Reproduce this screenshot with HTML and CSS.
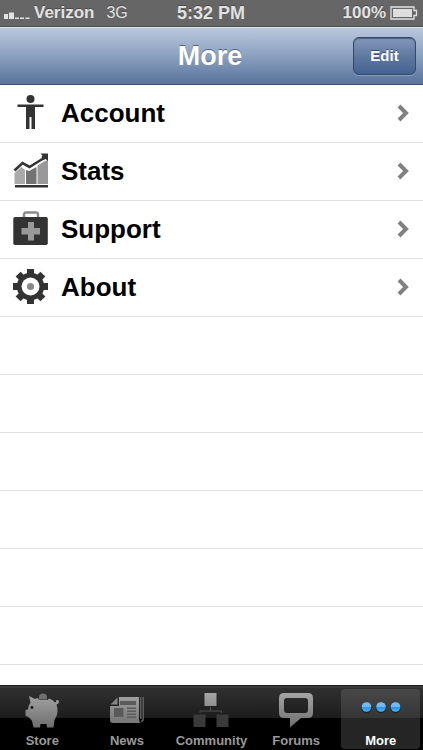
FILE: index.html
```html
<!DOCTYPE html>
<html lang="en">
<head>
<meta charset="utf-8">
<meta name="viewport" content="width=device-width, initial-scale=1">
<title>More</title>
<link rel="stylesheet" href="styles.css">
</head>
<body>
<div class="status">
  <div class="status-side">
    <svg class="signal" width="26" height="8" viewBox="0 0 26 8" fill="#e2e2e2" aria-hidden="true"><path d="M0 2h4v5H0zM5 0.500h5V7H5zM11 5.500h4V7h-4zM16 5.500h4V7h-4zM21.500 5.500h4V7h-4z"/></svg>
    <span class="carrier">Verizon</span>
    <span class="network">3G</span>
  </div>
  <span class="clock">5:32 PM</span>
  <div class="status-side status-right">
    <span>100%</span>
    <svg class="battery" width="28" height="14" viewBox="0 0 28 14" aria-hidden="true"><path d="M1 1h23v3.500h2.500v5H24V13H1z" fill="none" stroke="#e2e2e2" stroke-width="1.300"/><path d="M3 3h19v8H3z" fill="#dedede"/></svg>
  </div>
</div>
<header class="nav">
  <h1 class="title">More</h1>
  <button class="edit" type="button">Edit</button>
</header>
<main class="content">
  <ul class="list">
    <li class="row"><a class="link" href="#account">
      <svg class="icon" width="36" height="36" viewBox="0 0 36 36" fill="#333" aria-hidden="true"><circle cx="17.500" cy="4" r="4"/><path d="M4.500 9.500h26v2.500H22V34h-3.500V22h-2v12H13V12H4.500z"/></svg>
      <span>Account</span>
      <svg class="chevron" width="14" height="18" viewBox="0 0 14 18" aria-hidden="true"><path d="M2 2l7 7-7 7"/></svg>
    </a></li>
    <li class="row"><a class="link" href="#stats">
      <svg class="icon" width="36" height="36" viewBox="0 0 36 36" aria-hidden="true"><path d="M1.500 20l7-6L12 17v14H1.500z" fill="#aaa"/><path d="M13 17l3 1 7.500-4v17H13z" fill="#737373"/><path d="M24.500 12.500L32 8l3-1v24H24.500z" fill="#999"/><path d="M1.500 17.500l8-7.500 7 4L31 5" fill="none" stroke="#333" stroke-width="2.600"/><path d="M27.500 0.500H35V8l-2.500-2-2 1-2-3 1-1.500zM2 32h33v2.500H2z" fill="#333"/></svg>
      <span>Stats</span>
      <svg class="chevron" width="14" height="18" viewBox="0 0 14 18" aria-hidden="true"><path d="M2 2l7 7-7 7"/></svg>
    </a></li>
    <li class="row"><a class="link" href="#support">
      <svg class="icon" width="36" height="36" viewBox="0 0 36 36" aria-hidden="true"><path d="M11 6V3.500Q11 1.500 13 1.500h10Q25 1.500 25 3.500V6" fill="none" stroke="#8c8c8c" stroke-width="2.400"/><rect x="0.300" y="6" width="34.500" height="28" rx="1.800" fill="#333"/><path d="M15 11h6v6h6v6.500h-6v6h-6v-6H8.500V17H15z" fill="#999"/></svg>
      <span>Support</span>
      <svg class="chevron" width="14" height="18" viewBox="0 0 14 18" aria-hidden="true"><path d="M2 2l7 7-7 7"/></svg>
    </a></li>
    <li class="row"><a class="link" href="#about">
      <svg class="icon" width="36" height="36" viewBox="0 0 36 36" aria-hidden="true"><g transform="translate(17.500 17.500)"><g fill="#333"><path id="teeth" d="M-3.500-17.500h7v35h-7z"/><use href="#teeth" transform="rotate(45)"/><use href="#teeth" transform="rotate(90)"/><use href="#teeth" transform="rotate(135)"/><circle r="13.700"/></g><circle r="9" fill="#fff"/><circle r="3.600" fill="#888"/></g></svg>
      <span>About</span>
      <svg class="chevron" width="14" height="18" viewBox="0 0 14 18" aria-hidden="true"><path d="M2 2l7 7-7 7"/></svg>
    </a></li>
  </ul>
</main>
<nav class="tabs">
  <a class="tab" href="#store">
    <svg width="36" height="36" viewBox="0 0 36 36" aria-hidden="true"><defs><linearGradient id="metal" gradientUnits="userSpaceOnUse" x1="0" y1="0" x2="0" y2="36"><stop offset="0" stop-color="#a5a5a5"/><stop offset="1" stop-color="#6c6c6c"/></linearGradient></defs><path d="M15 4.500a4 4 0 0 1 8 0V6.500h-8z" fill="#707070"/><path d="M5 3l6 3 2.500-1 2 2h8l1.500-1.500q4.500 1.500 6 4 1.500-.500 1-2 2-1 3 .500 0 3-2.500 3.500 3 8-2 15.500L29.500 34.500H23L22.500 31h-6L16 34.500H9.500L8 28q-1.500-2.500-3-3.500L1.500 22.500v-5.500l2.500-.500Q4.500 12 6.500 9.500z" fill="url(#metal)"/><circle cx="8" cy="14.500" r="1.400" fill="#181818"/></svg>
    <span>Store</span>
  </a>
  <a class="tab" href="#news">
    <svg width="36" height="36" viewBox="0 0 36 36" aria-hidden="true"><path d="M10 4h20v22q0 3 2 4H4q-3 0-3-3V13h9z" fill="url(#metal)"/><path d="M1.500 11.500L8.500 4.500v7z" fill="#858585"/><path d="M31 4h1.500v22H31zM33.500 4H35v22q0 3-3 3v-1.500q1.500 0 1.500-2z" fill="#5b5b5b"/><path d="M11 8h16v4H11zM5 15h9.500v9H5zM18 14.500h9V16h-9zM18 17.500h9V19h-9zM18 20.500h9V22h-9zM18 23.500h9V25h-9z" fill="#5a5a5a"/></svg>
    <span>News</span>
  </a>
  <a class="tab" href="#community">
    <svg width="36" height="36" viewBox="0 0 36 36" aria-hidden="true"><path d="M11.500 0h12v13h-12z" fill="url(#metal)"/><path d="M17.500 14v4M7 20v-2h21.500v2" fill="none" stroke="#505050"/><path d="M.500 21.500h12V34H.500zM23.500 21.500h12V34h-12z" fill="#3a3a3a"/></svg>
    <span>Community</span>
  </a>
  <a class="tab" href="#forums">
    <svg width="36" height="36" viewBox="0 0 36 36" aria-hidden="true"><path fill-rule="evenodd" d="M6 0h24q5 0 5 5v15q0 5-5 5h-7L12 34.500V25H6q-5 0-5-5V5q0-5 5-5zM9 5q-3 0-3 3v9q0 3 3 3h18q3 0 3-3V8q0-3-3-3z" fill="url(#metal)"/></svg>
    <span>Forums</span>
  </a>
  <a class="tab tab-on" href="#more" aria-current="page">
    <svg width="42" height="36" viewBox="0 0 42 36" aria-hidden="true"><defs><linearGradient id="blue" x1="0" y1="0" x2="0" y2="1"><stop offset="0" stop-color="#7dbdf2"/><stop offset=".45" stop-color="#6db7f5"/><stop offset=".5" stop-color="#2992f0"/><stop offset="1" stop-color="#43b6fb"/></linearGradient></defs><g fill="#242424"><circle cx="6.500" cy="15.500" r="5"/><circle cx="21" cy="15.500" r="5"/><circle cx="35.500" cy="15.500" r="5"/></g><g fill="url(#blue)"><circle cx="6.500" cy="14" r="4.800"/><circle cx="21" cy="14" r="4.800"/><circle cx="35.500" cy="14" r="4.800"/></g></svg>
    <span>More</span>
  </a>
</nav>
</body>
</html>
```
FILE: styles.css
```css
* {
  box-sizing: border-box;
}

body {
  margin: 0;
  min-height: 100vh;
  display: flex;
  flex-direction: column;
  background: #fff;
  color: #000;
  font-family: "Liberation Sans", Arial, sans-serif;
  font-weight: bold;
}

a {
  color: inherit;
  text-decoration: none;
}

svg {
  display: block;
  flex: none;
}

.status {
  display: grid;
  grid-template-columns: 1fr auto 1fr;
  align-items: center;
  height: 27px;
  padding: 0 5px 0 4px;
  background: #666;
  border-bottom: 1px solid #4b4b4b;
  color: #e2e2e2;
  font-size: 17px;
  line-height: 26px;
  text-shadow: 0 -1px 0 #4a4a4a;
}

.status-side {
  display: flex;
  align-items: center;
}

.status-right {
  justify-content: flex-end;
  gap: 4px;
}

.signal {
  margin: 5px 4px 0 0;
}

.network {
  margin-left: 12px;
  font-size: 16px;
  font-weight: normal;
}

.clock {
  font-size: 18px;
}

.nav {
  display: grid;
  grid-template-columns: 1fr auto 1fr;
  align-items: center;
  height: 58px;
  padding: 0 7px 0 4px;
  background: linear-gradient(#bac8dc, #90a5c4 45%, #587299);
  border-top: 1px solid #dce4ee;
  border-bottom: 1px solid #3d5578;
}

.title {
  grid-column: 2;
  margin: 0;
  color: #fff;
  font-size: 27px;
  line-height: 32px;
  text-shadow: 0 -1px 0 #50617a;
}

.edit {
  justify-self: end;
  width: 63px;
  height: 38px;
  padding: 0;
  border: 1px solid #344a6c;
  border-radius: 6px;
  background: linear-gradient(#8298ba, #60799f 50%, #436292);
  box-shadow: inset 0 1px 1px #4a6080, 0 1px 0 #8b9dba;
  color: #fff;
  font: bold 15px/20px "Liberation Sans", Arial, sans-serif;
  text-shadow: 0 -1px 0 #3a4f70;
}

.content {
  flex: 1;
  background: repeating-linear-gradient(#fff 0 57px, #e0e0e0 57px 58px);
}

.list {
  margin: 0;
  padding: 0;
  list-style: none;
}

.row {
  height: 58px;
}

.link {
  display: flex;
  align-items: center;
  gap: 12px;
  height: 56px;
  padding: 0 12px 0 13px;
  font-size: 26px;
  line-height: 32px;
}

.chevron {
  margin-left: auto;
  fill: none;
  stroke: #808080;
  stroke-width: 4;
}

.tabs {
  display: grid;
  grid-template-columns: repeat(5, 1fr);
  height: 65px;
  padding: 4px 0 3px;
  background: linear-gradient(#1c1c1c 0 1px, #3b3b3b 1px 3px, #303030 3px, #1c1c1c 33px, #000 33px);
  color: #999;
  font-size: 13px;
  line-height: 16px;
}

.tab {
  display: flex;
  flex-direction: column;
  align-items: center;
  gap: 4px;
  margin: 0 3px;
  padding-top: 4px;
  border-radius: 4px;
}

.tab-on {
  background: linear-gradient(#484848, #353535 29px, #252525 29px);
  color: #fff;
}
```
